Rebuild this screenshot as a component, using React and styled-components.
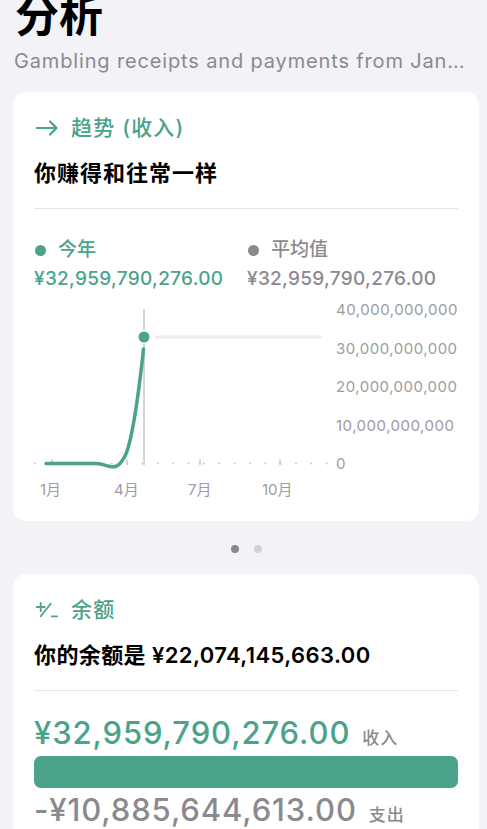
import styled, { createGlobalStyle } from "styled-components";

const GREEN = "#4aa38a";
const GRAY = "#8a8a8e";
const AXIS = "#9c9ca1";

const GlobalStyle = createGlobalStyle`
  body {
    margin: 0;
    background: #f2f2f7;
    font-family: Inter, "Noto Sans CJK SC", sans-serif;
    -webkit-font-smoothing: antialiased;
  }
`;

const Page = styled.div`
  padding: 0 8px 40px 13px;
  overflow: hidden;
`;

const Title = styled.h1`
  margin: -9px 0 0 2px;
  font-size: 44px;
  line-height: 50px;
  font-weight: 700;
  color: #000;
`;

const Subtitle = styled.div`
  margin: 8px 0 0 1px;
  font-size: 20px;
  line-height: 24px;
  letter-spacing: 0.85px;
  color: ${GRAY};
  white-space: nowrap;
  overflow: hidden;
  text-overflow: ellipsis;
  padding-right: 6px;
`;

const Card = styled.section`
  background: #fff;
  border-radius: 13px;
  padding: ${(p) => p.$pad};
  margin-top: ${(p) => p.$top || 0}px;
`;

const CardHeader = styled.div`
  display: flex;
  align-items: center;
  gap: 13px;
  color: ${GREEN};
  font-size: 21px;
  line-height: 24px;
  letter-spacing: 1.2px;
  font-weight: 500;
  svg {
    flex: none;
  }
`;

const Headline = styled.div`
  margin-top: 20px;
  font-size: 22px;
  line-height: 26px;
  font-weight: 600;
  letter-spacing: ${(p) => p.$spacing || "1px"};
  color: #000;
`;

const Divider = styled.div`
  height: 1px;
  background: #e5e5ea;
  margin-top: ${(p) => p.$top}px;
`;

const Legend = styled.div`
  display: grid;
  grid-template-columns: 213px 1fr;
  margin-top: 30px;
`;

const LegendLabel = styled.div`
  display: flex;
  align-items: center;
  gap: 12px;
  padding-left: 1px;
  font-size: 19px;
  line-height: 22px;
  font-weight: 500;
  color: ${(p) => p.$color};
  &::before {
    content: "";
    width: 11px;
    height: 11px;
    border-radius: 50%;
    background: ${(p) => p.$color};
  }
`;

const LegendValue = styled.div`
  margin-top: 6px;
  font-size: 19px;
  line-height: 24px;
  font-weight: 500;
  letter-spacing: 0.3px;
  color: ${(p) => p.$color};
`;

const ChartRow = styled.div`
  display: flex;
  margin-top: 8px;
`;

const YAxis = styled.div`
  display: flex;
  flex-direction: column;
  justify-content: space-between;
  height: 176px;
  font-size: 15px;
  line-height: 22px;
  letter-spacing: 0.5px;
  color: ${AXIS};
  white-space: nowrap;
`;

const XAxis = styled.div`
  display: flex;
  margin-top: 5px;
`;

const XLabel = styled.div`
  width: 74px;
  padding-left: 6px;
  box-sizing: border-box;
  font-size: 15px;
  line-height: 20px;
  color: ${AXIS};
`;

const Pager = styled.div`
  display: flex;
  justify-content: center;
  gap: 15px;
  padding: 24px 0 21px;
`;

const PagerDot = styled.span`
  width: 8px;
  height: 8px;
  border-radius: 50%;
  background: ${(p) => (p.$active ? GRAY : "#d1d1d6")};
`;

const AmountRow = styled.div`
  display: flex;
  align-items: baseline;
  gap: 12px;
  margin-top: ${(p) => p.$top}px;
`;

const Amount = styled.span`
  font-size: 31px;
  line-height: 36px;
  font-weight: 500;
  letter-spacing: 0.9px;
  color: ${(p) => p.$color};
`;

const AmountTag = styled.span`
  font-size: 17px;
  font-weight: 500;
  letter-spacing: 1px;
  color: ${GRAY};
`;

const Bar = styled.div`
  height: 32px;
  border-radius: 7px;
  background: ${GREEN};
  margin-top: 5px;
`;

const ArrowIcon = () => (
  <svg width="24" height="16" viewBox="0 0 24 16">
    <path
      d="M3 8H22.5M16 1.5L22.5 8L16 14.5"
      stroke="currentColor"
      strokeWidth="2.2"
      fill="none"
      strokeLinecap="round"
      strokeLinejoin="round"
    />
  </svg>
);

const PlusMinusIcon = () => (
  <svg width="24" height="16" viewBox="0 -1 24 16">
    <path
      d="M2.7 4H10.7M6.7 0V8.2M6.7 13.3L16.7 0.7M17.7 13.3H23.3"
      stroke="currentColor"
      strokeWidth="1.8"
      fill="none"
      strokeLinecap="round"
    />
  </svg>
);

const baseDots = Array.from({ length: 20 }, (_, i) => 1 + i * 15.35);
const ticks = [18, 93, 166, 246];

const TrendChart = () => (
  <svg width="302" height="176" viewBox="0 0 302 176">
    {baseDots.map((x) => (
      <circle key={x} cx={x} cy="164.5" r="1" fill="#c7c7cc" />
    ))}
    {ticks.map((x) => (
      <line key={x} x1={x} y1="160.5" x2={x} y2="166" stroke="#c7c7cc" strokeWidth="1.5" />
    ))}
    <line x1="110" y1="10" x2="110" y2="166" stroke="#d6d6db" strokeWidth="2" />
    <line
      x1="122"
      y1="38"
      x2="286"
      y2="38"
      stroke="#ebebf0"
      strokeWidth="3"
      strokeLinecap="round"
    />
    <path
      d="M12 164.5L62 164.5C70 164.5 73 167.8 79 167.8C85 167.8 88 162 91 157C97 145 103 110 109.5 50"
      stroke={GREEN}
      strokeWidth="3.5"
      fill="none"
      strokeLinecap="round"
    />
    <circle cx="110" cy="38" r="5.5" fill={GREEN} stroke="#fff" strokeWidth="2.5" paintOrder="stroke" />
  </svg>
);

export default function App() {
  return (
    <Page>
      <GlobalStyle />
      <Title>分析</Title>
      <Subtitle>Gambling receipts and payments from January to December</Subtitle>

      <Card $pad="24px 21px 21px" $top={19}>
        <CardHeader>
          <ArrowIcon />
          趋势 (收入)
        </CardHeader>
        <Headline>你赚得和往常一样</Headline>
        <Divider $top={22} />
        <Legend>
          <div>
            <LegendLabel $color={GREEN}>今年</LegendLabel>
            <LegendValue $color={GREEN}>¥32,959,790,276.00</LegendValue>
          </div>
          <div>
            <LegendLabel $color={GRAY}>平均值</LegendLabel>
            <LegendValue $color={GRAY}>¥32,959,790,276.00</LegendValue>
          </div>
        </Legend>
        <ChartRow>
          <TrendChart />
          <YAxis>
            <span>40,000,000,000</span>
            <span>30,000,000,000</span>
            <span>20,000,000,000</span>
            <span>10,000,000,000</span>
            <span>0</span>
          </YAxis>
        </ChartRow>
        <XAxis>
          <XLabel>1月</XLabel>
          <XLabel>4月</XLabel>
          <XLabel>7月</XLabel>
          <XLabel>10月</XLabel>
        </XAxis>
      </Card>

      <Pager>
        <PagerDot $active />
        <PagerDot />
      </Pager>

      <Card $pad="24px 21px 24px">
        <CardHeader>
          <PlusMinusIcon />
          余额
        </CardHeader>
        <Headline $spacing="0.4px">你的余额是 ¥22,074,145,663.00</Headline>
        <Divider $top={22} />
        <AmountRow $top={24}>
          <Amount $color={GREEN}>¥32,959,790,276.00</Amount>
          <AmountTag>收入</AmountTag>
        </AmountRow>
        <Bar />
        <AmountRow $top={4}>
          <Amount $color={GRAY}>-¥10,885,644,613.00</Amount>
          <AmountTag>支出</AmountTag>
        </AmountRow>
      </Card>
    </Page>
  );
}
